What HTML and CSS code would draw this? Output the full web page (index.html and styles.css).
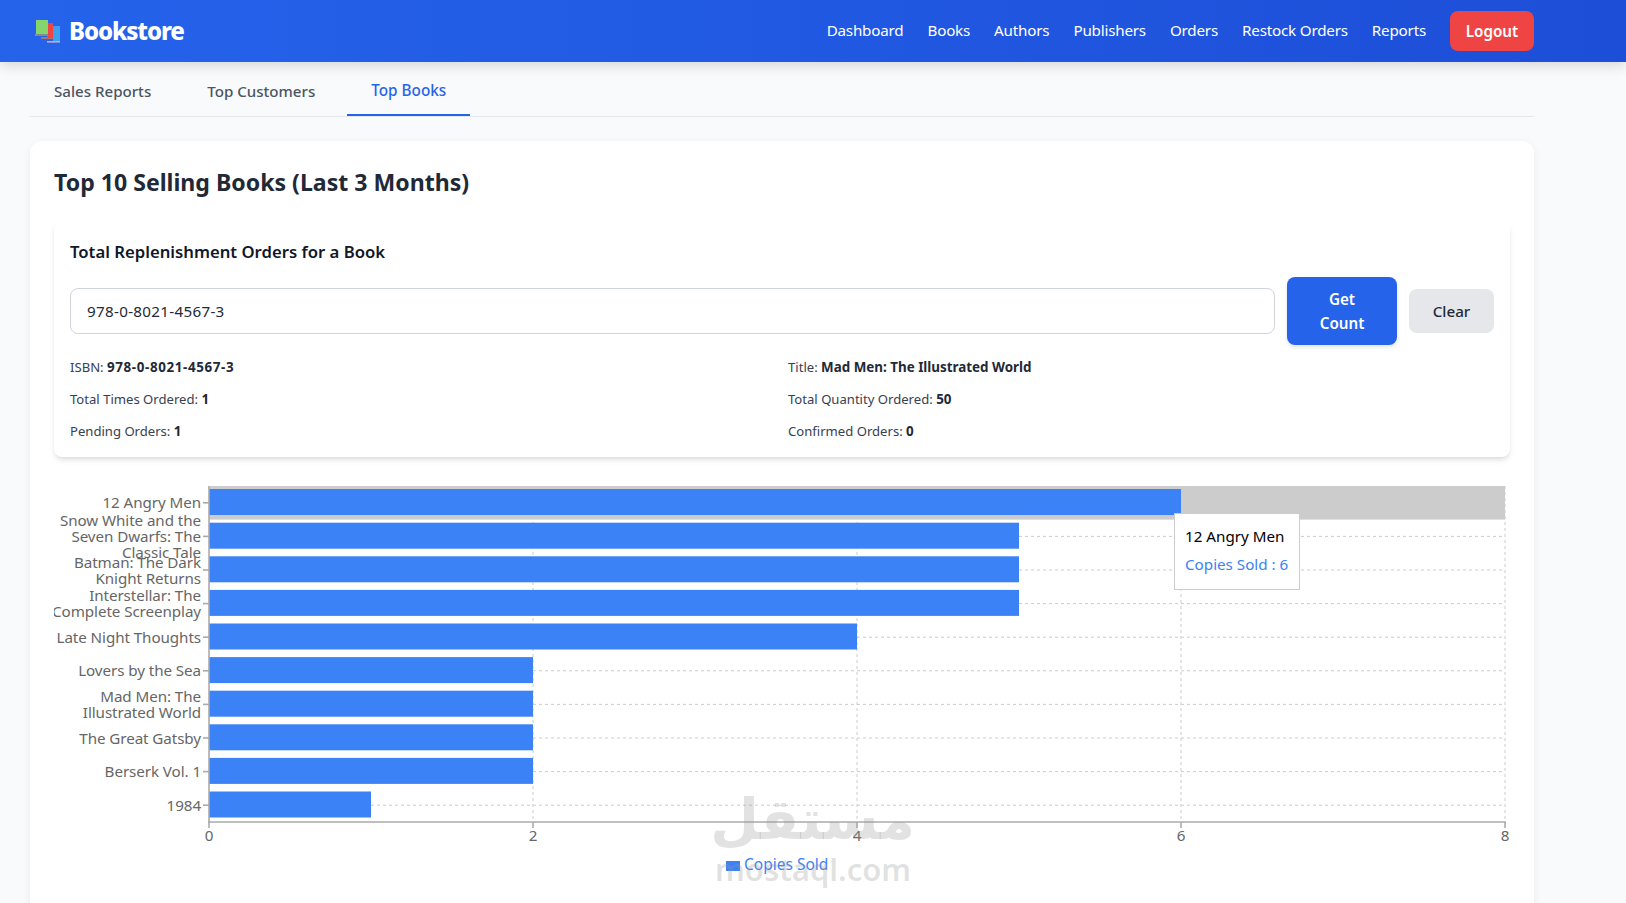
FILE: index.html
```html
<!DOCTYPE html>
<html lang="en">
<head>
<meta charset="utf-8">
<title>Bookstore</title>
<link rel="stylesheet" href="styles.css">
</head>
<body>
<header class="topbar">
  <div class="brand">
    <svg class="brand-icon" width="25" height="23" viewBox="0 0 25 23">
      <rect x="6" y="17" width="12" height="2" fill="#b0716a"/>
      <rect x="12" y="3" width="6" height="15" fill="#ef4444"/>
      <rect x="18" y="6" width="7" height="15" fill="#3aa0ef"/>
      <rect x="12" y="21" width="13" height="1.6" fill="#c9a8e0"/>
      <rect x="1" y="0" width="12" height="14" fill="#86d56c"/>
      <rect x="0" y="14" width="13" height="2" fill="#7f8f88"/>
    </svg>
    <span class="brand-name">Bookstore</span>
  </div>
  <nav class="nav">
    <a class="nav-link">Dashboard</a>
    <a class="nav-link">Books</a>
    <a class="nav-link">Authors</a>
    <a class="nav-link">Publishers</a>
    <a class="nav-link">Orders</a>
    <a class="nav-link">Restock Orders</a>
    <a class="nav-link">Reports</a>
    <button class="logout">Logout</button>
  </nav>
</header>

<main class="main">
  <div class="tabs">
    <a class="tab">Sales Reports</a>
    <a class="tab">Top Customers</a>
    <a class="tab tab-active">Top Books</a>
  </div>

  <section class="card">
    <h2 class="card-title">Top 10 Selling Books (Last 3 Months)</h2>

    <div class="panel">
      <h3 class="panel-title">Total Replenishment Orders for a Book</h3>
      <div class="form-row">
        <input class="isbn-input" type="text" value="978-0-8021-4567-3">
        <button class="btn btn-primary">Get Count</button>
        <button class="btn btn-muted">Clear</button>
      </div>
      <div class="info-grid">
        <p>ISBN: <b class="isbn-value">978-0-8021-4567-3</b></p>
        <p>Title: <b>Mad Men: The Illustrated World</b></p>
        <p>Total Times Ordered: <b>1</b></p>
        <p>Total Quantity Ordered: <b>50</b></p>
        <p>Pending Orders: <b>1</b></p>
        <p>Confirmed Orders: <b>0</b></p>
      </div>
    </div>

    <div class="chart">
      <svg class="chart-svg" width="1456" height="400" viewBox="0 0 1456 400">
        <g class="grid">
          <line x1="155" x2="1451" y1="5.5" y2="5.5"/>
          <line x1="155" x2="1451" y1="21.8" y2="21.8"/>
          <line x1="155" x2="1451" y1="55.4" y2="55.4"/>
          <line x1="155" x2="1451" y1="89" y2="89"/>
          <line x1="155" x2="1451" y1="122.6" y2="122.6"/>
          <line x1="155" x2="1451" y1="156.2" y2="156.2"/>
          <line x1="155" x2="1451" y1="189.8" y2="189.8"/>
          <line x1="155" x2="1451" y1="223.4" y2="223.4"/>
          <line x1="155" x2="1451" y1="257" y2="257"/>
          <line x1="155" x2="1451" y1="290.6" y2="290.6"/>
          <line x1="155" x2="1451" y1="324.2" y2="324.2"/>
          <line x1="479" x2="479" y1="5" y2="341"/>
          <line x1="803" x2="803" y1="5" y2="341"/>
          <line x1="1127" x2="1127" y1="5" y2="341"/>
          <line x1="1451" x2="1451" y1="5" y2="341"/>
        </g>
        <rect class="cursor" x="155" y="5" width="1296" height="33.6"/>
        <g class="bars">
          <rect x="155" y="8" width="972" height="26"/>
          <rect x="155" y="41.7" width="810" height="26"/>
          <rect x="155" y="75.3" width="810" height="26"/>
          <rect x="155" y="108.9" width="810" height="26"/>
          <rect x="155" y="142.5" width="648" height="26"/>
          <rect x="155" y="176.1" width="324" height="26"/>
          <rect x="155" y="209.7" width="324" height="26"/>
          <rect x="155" y="243.3" width="324" height="26"/>
          <rect x="155" y="276.9" width="324" height="26"/>
          <rect x="155" y="310.5" width="162" height="26"/>
        </g>
        <g class="axis">
          <line x1="155" x2="155" y1="5" y2="342"/>
          <line x1="154" x2="1452" y1="341" y2="341"/>
          <line x1="149" x2="155" y1="21.8" y2="21.8"/>
          <line x1="149" x2="155" y1="55.4" y2="55.4"/>
          <line x1="149" x2="155" y1="89" y2="89"/>
          <line x1="149" x2="155" y1="122.6" y2="122.6"/>
          <line x1="149" x2="155" y1="156.2" y2="156.2"/>
          <line x1="149" x2="155" y1="189.8" y2="189.8"/>
          <line x1="149" x2="155" y1="223.4" y2="223.4"/>
          <line x1="149" x2="155" y1="257" y2="257"/>
          <line x1="149" x2="155" y1="290.6" y2="290.6"/>
          <line x1="149" x2="155" y1="324.2" y2="324.2"/>
          <line x1="155" x2="155" y1="341" y2="347"/>
          <line x1="479" x2="479" y1="341" y2="347"/>
          <line x1="803" x2="803" y1="341" y2="347"/>
          <line x1="1127" x2="1127" y1="341" y2="347"/>
          <line x1="1451" x2="1451" y1="341" y2="347"/>
        </g>
        <g class="y-labels">
          <text x="147" y="26.5">12 Angry Men</text>
          <text x="147" y="45">Snow White and the</text>
          <text x="147" y="61">Seven Dwarfs: The</text>
          <text x="147" y="77">Classic Tale</text>
          <text x="147" y="87">Batman: The Dark</text>
          <text x="147" y="103">Knight Returns</text>
          <text x="147" y="120">Interstellar: The</text>
          <text x="147" y="136">Complete Screenplay</text>
          <text x="147" y="161.5">Late Night Thoughts</text>
          <text x="147" y="195">Lovers by the Sea</text>
          <text x="147" y="221">Mad Men: The</text>
          <text x="147" y="237">Illustrated World</text>
          <text x="147" y="263">The Great Gatsby</text>
          <text x="147" y="296">Berserk Vol. 1</text>
          <text x="147" y="329.5">1984</text>
        </g>
        <g class="x-labels">
          <text x="155" y="360">0</text>
          <text x="479" y="360">2</text>
          <text x="803" y="360">4</text>
          <text x="1127" y="360">6</text>
          <text x="1451" y="360">8</text>
        </g>
        <path class="legend-swatch" d="M672 380H686V390H672Z"/>
        <text class="legend-text" x="690" y="389">Copies Sold</text>
      </svg>
      <div class="tooltip">
        <div class="tooltip-label">12 Angry Men</div>
        <div class="tooltip-value">Copies Sold : 6</div>
      </div>
    </div>
  </section>
</main>

<div class="watermark" lang="ar">
  <div class="watermark-ar" dir="rtl">مستقل</div>
  <div class="watermark-en">mostaql.com</div>
</div>
</body>
</html>
```
FILE: styles.css
```css
* { box-sizing: border-box; }
html, body { height: 903px; overflow: hidden; }
body {
  margin: 0;
  background: #f9fafb;
  color: #1f2937;
  font-family: "Noto Sans", "Liberation Sans", sans-serif;
  font-size: 16px;
}
.topbar {
  height: 62px;
  padding: 0 92px 0 35px;
  display: flex;
  align-items: center;
  justify-content: space-between;
  background: linear-gradient(90deg, #2563eb, #1d4ed8);
  box-shadow: 0 4px 12px rgba(0,0,0,.14);
  position: relative;
}
.brand { display: flex; align-items: center; gap: 9px; }
.brand-icon { display: block; }
.brand-name {
  color: #fff;
  font-size: 24px;
  font-weight: 800;
  letter-spacing: -1.1px;
  line-height: 30px;
}
.nav { display: flex; align-items: center; gap: 24px; }
.nav-link {
  color: #fff;
  font-size: 15.2px;
  letter-spacing: -.2px;
  padding-bottom: 2px;
}
.logout {
  width: 84px;
  height: 40px;
  border: 0;
  border-radius: 8px;
  background: #ef4444;
  color: #fff;
  font: 600 15.2px "Noto Sans", sans-serif;
}
.main { width: 1504px; margin-left: 30px; }
.tabs {
  margin-top: 6px;
  height: 49px;
  display: flex;
  gap: 8px;
  border-bottom: 1px solid #e5e7eb;
}
.tab {
  height: 48px;
  padding: 11px 24px 0;
  color: #4b5563;
  font-size: 15.1px;
  font-weight: 500;
  line-height: 24px;
}
.tab-active {
  padding-top: 10px;
  color: #2563eb;
  font-size: 15.3px;
  border-bottom: 2px solid #2563eb;
}
.card {
  margin-top: 24px;
  padding: 25px 24px 24px;
  height: 900px;
  background: #fff;
  border-radius: 12px;
  box-shadow: 0 2px 8px rgba(0,0,0,.06);
}
.card-title {
  margin: 0 0 23px;
  color: #1f2937;
  font-size: 23.1px;
  font-weight: 700;
  line-height: 32px;
}
.panel {
  padding: 17px 16px 16px;
  background: #fff;
  border-radius: 8px;
  box-shadow: 0 4px 6px -1px rgba(0,0,0,.1), 0 2px 4px -2px rgba(0,0,0,.1);
}
.panel-title {
  margin: 0 0 11px;
  color: #111827;
  font-size: 16.7px;
  font-weight: 600;
  line-height: 28px;
}
.form-row { display: flex; align-items: center; gap: 12px; }
.isbn-input {
  flex: 1;
  min-width: 0;
  height: 46px;
  padding: 0 16px;
  border: 1px solid #d1d5db;
  border-radius: 8px;
  color: #1f2937;
  font: 15.2px "Noto Sans", sans-serif;
  letter-spacing: .3px;
}
.btn {
  border: 0;
  border-radius: 8px;
  font: 600 15.2px/24px "Noto Sans", sans-serif;
}
.btn-primary {
  width: 110px;
  height: 68px;
  padding: 10px 24px;
  background: #2563eb;
  color: #fff;
  box-shadow: 0 2px 4px rgba(0,0,0,.12);
}
.btn-muted {
  width: 85px;
  height: 44px;
  background: #e5e7eb;
  color: #1f2937;
  font-weight: 500;
}
.info-grid {
  margin-top: 12px;
  display: grid;
  grid-template-columns: 1fr 1fr;
  gap: 12px;
  color: #374151;
  font-size: 13.1px;
  line-height: 20px;
}
.info-grid p { margin: 0; }
.info-grid b { color: #1f2937; font-size: 13.4px; font-weight: 700; }
.info-grid .isbn-value { letter-spacing: .62px; }
.chart { position: relative; margin-top: 24px; }
.chart-svg { display: block; overflow: hidden; }
.grid line { stroke: #ccc; stroke-width: 1; stroke-dasharray: 3 3; }
.cursor { fill: #ccc; }
.bars rect { fill: #3b82f6; }
.axis line { stroke: #aaa; stroke-width: 1.6; }
.y-labels text { fill: #666; font-size: 15.2px; letter-spacing: -.08px; text-anchor: end; }
.x-labels text { fill: #666; font-size: 15.2px; text-anchor: middle; }
.legend-swatch { fill: #3b82f6; }
.legend-text { fill: #3b82f6; font-size: 15.5px; }
.tooltip {
  position: absolute;
  left: 1120px;
  top: 32px;
  width: 126px;
  height: 77px;
  padding: 10px;
  background: #fff;
  border: 1px solid #ccc;
  font-size: 15.2px;
  white-space: nowrap;
}
.tooltip-label { color: #000; line-height: 24px; margin-bottom: 4px; }
.tooltip-value { color: #3b82f6; line-height: 24px; }
.watermark {
  position: absolute;
  left: 715px;
  top: 789px;
  width: 195px;
  color: rgba(150,150,150,.28);
  text-align: center;
  pointer-events: none;
}
.watermark-ar {
  font-family: "DejaVu Sans", sans-serif;
  font-size: 56px;
  font-weight: 700;
  line-height: 62px;
  padding-right: 0;
  transform: translateX(5px);
}
.watermark-en {
  font-family: "Noto Sans", sans-serif;
  font-size: 31px;
  font-weight: 600;
  line-height: 36px;
}
```
